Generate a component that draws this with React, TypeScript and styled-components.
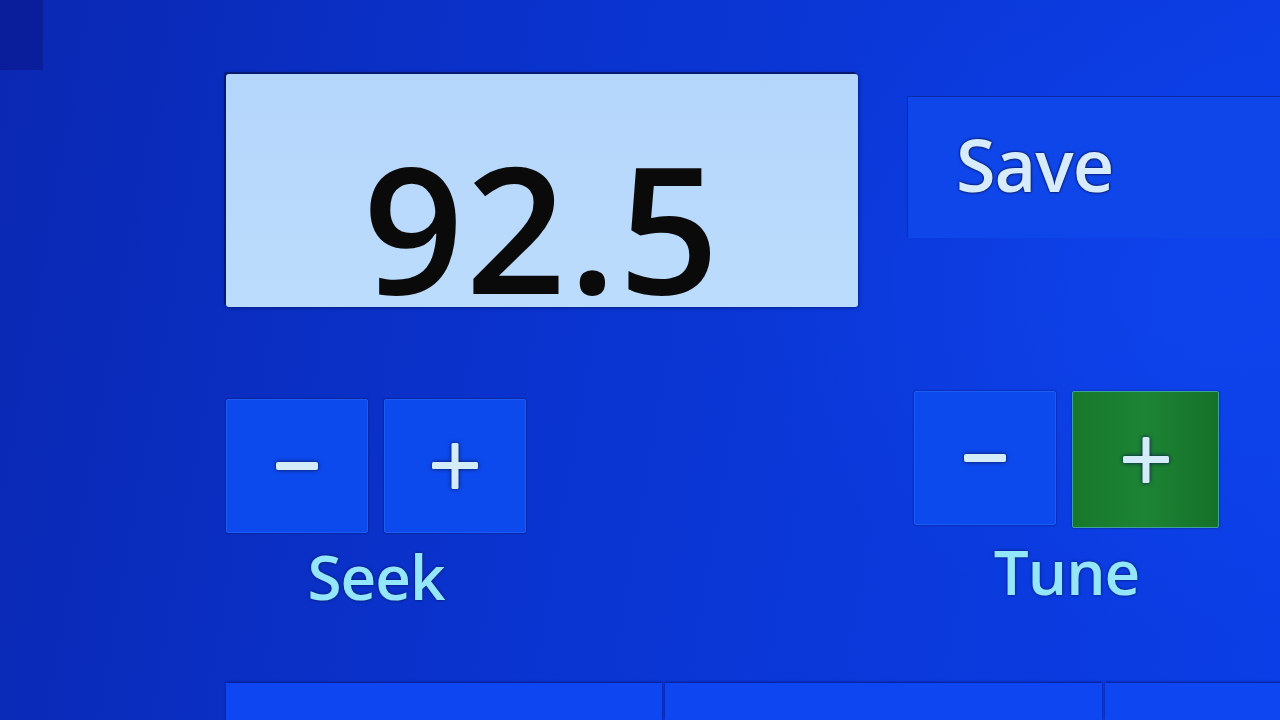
import React from "react"
import styled, { createGlobalStyle } from "styled-components"

const GlobalStyle = createGlobalStyle`
  html, body {
    margin: 0;
    padding: 0;
    width: 1280px;
    height: 720px;
    overflow: hidden;
  }
  body {
    font-family: "Open Sans", "Noto Sans", "DejaVu Sans", sans-serif;
  }
`

const Screen = styled.div`
  width: 1280px;
  height: 720px;
  display: flex;
  overflow: hidden;
  background:
    radial-gradient(ellipse 700px 500px at 95% 40%, rgba(20, 80, 255, 0.35), transparent 70%),
    linear-gradient(100deg, #0a28b2 0%, #0a34d0 45%, #0b3ee6 100%);
`

const Rail = styled.div`
  width: 43px;
  flex: none;
`

const CornerTab = styled.div`
  height: 70px;
  background: #0a1e9c;
`

const Content = styled.div`
  flex: 1;
  padding-left: 183px;
  display: flex;
  flex-direction: column;
`

const TopRow = styled.div`
  display: flex;
  align-items: flex-start;
  gap: 50px;
  margin-top: 74px;
`

const Display = styled.div`
  width: 632px;
  height: 233px;
  flex: none;
  box-sizing: border-box;
  background: linear-gradient(180deg, #b4d6fb 0%, #bcdcfc 100%);
  border-radius: 3px;
  box-shadow: -2px -2px 0 #071a70, 0 0 4px rgba(0, 0, 40, 0.6);
  display: flex;
  align-items: flex-end;
  justify-content: center;
`

const Frequency = styled.span`
  font-size: 176px;
  line-height: 150px;
  letter-spacing: 2px;
  color: #0a0a0a;
  font-weight: 600;
  margin-bottom: 6px;
`

const SaveButton = styled.div`
  margin-top: 23px;
  flex: 1;
  height: 141px;
  background: #0f46ea;
  box-shadow: -1px -1px 0 #0a2aa0;
  display: flex;
  align-items: center;
  padding-left: 48px;
  box-sizing: border-box;
`

const SaveLabel = styled.span`
  font-size: 72px;
  font-weight: 600;
  letter-spacing: -1px;
  color: #d6ecfc;
  text-shadow: 0 0 3px #06124d, 0 0 2px #06124d;
  margin-top: -8px;
`

const ControlRow = styled.div`
  display: flex;
  align-items: flex-start;
  margin-top: 84px;
  padding-right: 66px;
  justify-content: space-between;
`

const Group = styled.div<{ $offset: number }>`
  display: flex;
  flex-direction: column;
  align-items: center;
  margin-top: ${p => p.$offset}px;
`

const Pair = styled.div`
  display: flex;
  gap: 16px;
`

const Key = styled.div<{ $green?: boolean }>`
  width: ${p => (p.$green ? 147 : 142)}px;
  height: ${p => (p.$green ? 137 : 134)}px;
  background: ${p => (p.$green ? "linear-gradient(90deg, #17782c, #1d8434 50%, #157029)" : "#0d4aee")};
  border: 1px solid ${p => (p.$green ? "#3fa0a0" : "#1c5cf5")};
  box-shadow: 0 0 2px rgba(0, 0, 50, 0.7);
  border-radius: 2px;
  display: flex;
  align-items: center;
  justify-content: center;
  box-sizing: border-box;
`

const Glyph = styled.svg`
  width: 50px;
  height: 50px;
  filter: drop-shadow(0 0 2px #06124d);
`

const GroupLabel = styled.span`
  margin-top: 3px;
  font-size: 62px;
  font-weight: 600;
  line-height: 80px;
  letter-spacing: -1px;
  color: #94e6fb;
  text-shadow: 0 0 3px #06124d;
`

const BottomRow = styled.div`
  margin-top: auto;
  height: 37px;
  display: flex;
  gap: 3px;
`

const Tab = styled.div<{ $w: number }>`
  width: ${p => p.$w}px;
  flex: none;
  background: #0e46f2;
  box-shadow: 0 -1px 2px rgba(5, 20, 120, 0.8);
`

const Minus = () => (
  <Glyph viewBox="0 0 50 50">
    <rect x="4" y="21" width="42" height="8" rx="2" fill="#d4ecf8" />
  </Glyph>
)

const Plus = () => (
  <Glyph viewBox="0 0 50 50">
    <rect x="2" y="21" width="46" height="7" rx="1.5" fill="#d4ecf8" />
    <rect x="21.5" y="2" width="7" height="46" rx="1.5" fill="#d4ecf8" />
  </Glyph>
)

const App = () => (
  <>
    <GlobalStyle />
    <Screen>
      <Rail>
        <CornerTab />
      </Rail>
      <Content>
        <TopRow>
          <Display>
            <Frequency>92.5</Frequency>
          </Display>
          <SaveButton>
            <SaveLabel>Save</SaveLabel>
          </SaveButton>
        </TopRow>
        <ControlRow>
          <Group $offset={8}>
            <Pair>
              <Key>
                <Minus />
              </Key>
              <Key>
                <Plus />
              </Key>
            </Pair>
            <GroupLabel>Seek</GroupLabel>
          </Group>
          <Group $offset={0}>
            <Pair>
              <Key>
                <Minus />
              </Key>
              <Key $green>
                <Plus />
              </Key>
            </Pair>
            <GroupLabel>Tune</GroupLabel>
          </Group>
        </ControlRow>
        <BottomRow>
          <Tab $w={436} />
          <Tab $w={437} />
          <Tab $w={180} />
        </BottomRow>
      </Content>
    </Screen>
  </>
)

export default App
